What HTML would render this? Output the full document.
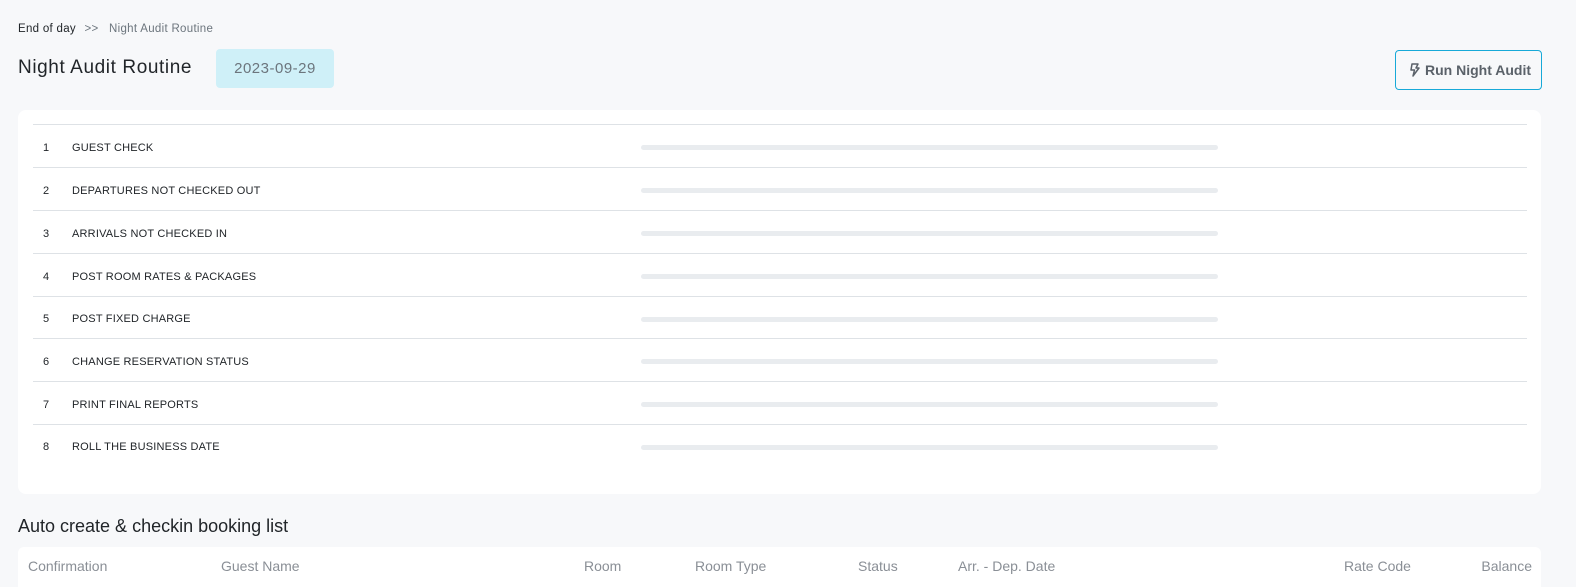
<!DOCTYPE html>
<html><head><style>
*{margin:0;padding:0;box-sizing:border-box}
body{width:1576px;height:586px;background:#f7f8fa;font-family:"Liberation Sans",sans-serif;position:relative;overflow:hidden;color:#212529}
.a{position:absolute;white-space:nowrap}
.card{position:absolute;left:18px;top:110px;width:1523px;height:384px;background:#fff;border-radius:8px}
.line{position:absolute;left:33px;width:1494px;height:1px;background:#dee2e6}
.num{position:absolute;left:43px;font-size:11px;color:#212529}
.lbl{position:absolute;left:72px;font-size:11px;letter-spacing:.2px;color:#212529}
.bar{position:absolute;left:641px;width:577px;height:5px;border-radius:3px;background:#e9ecef}
.th{position:absolute;top:558px;font-size:14px;color:#8a8f96}
</style></head><body>
<div class="a" style="left:18px;top:23px;font-size:11.5px;letter-spacing:.3px;color:#212529">End of day <span style="color:#6c757d;margin:0 7px 0 5px">&gt;&gt;</span> <span style="color:#6c757d">Night Audit Routine</span></div>
<div class="a" style="left:18px;top:57px;font-size:19px;letter-spacing:.6px;color:#212529">Night Audit Routine</div>
<div class="a" style="left:216px;top:49px;width:118px;height:39px;background:#cff0f8;border-radius:4px;font-size:15px;letter-spacing:.5px;color:#6c757d;text-align:center;line-height:39px">2023-09-29</div>
<div class="a" style="left:1395px;top:50px;width:147px;height:40px;border:1px solid #17a9d8;border-radius:4px;font-size:14px;font-weight:bold;color:#5a6169;line-height:38px;padding-left:14px">
<svg width="10" height="14" viewBox="0 0 10 14" style="vertical-align:-2px;margin-right:5px"><path d="M2 1h6L6 5h3L3 13l1.5-6H1z" fill="none" stroke="#5a6169" stroke-width="1.5" stroke-linejoin="round"/></svg>Run Night Audit</div>
<div class="card"></div>
<div class="line" style="top:124px"></div>
<div class="num" style="top:142px">1</div><div class="lbl" style="top:142px">GUEST CHECK</div><div class="bar" style="top:145px"></div><div class="line" style="top:167px"></div>
<div class="num" style="top:185px">2</div><div class="lbl" style="top:185px">DEPARTURES NOT CHECKED OUT</div><div class="bar" style="top:188px"></div><div class="line" style="top:210px"></div>
<div class="num" style="top:228px">3</div><div class="lbl" style="top:228px">ARRIVALS NOT CHECKED IN</div><div class="bar" style="top:231px"></div><div class="line" style="top:253px"></div>
<div class="num" style="top:271px">4</div><div class="lbl" style="top:271px">POST ROOM RATES &amp; PACKAGES</div><div class="bar" style="top:274px"></div><div class="line" style="top:296px"></div>
<div class="num" style="top:313px">5</div><div class="lbl" style="top:313px">POST FIXED CHARGE</div><div class="bar" style="top:317px"></div><div class="line" style="top:338px"></div>
<div class="num" style="top:356px">6</div><div class="lbl" style="top:356px">CHANGE RESERVATION STATUS</div><div class="bar" style="top:359px"></div><div class="line" style="top:381px"></div>
<div class="num" style="top:399px">7</div><div class="lbl" style="top:399px">PRINT FINAL REPORTS</div><div class="bar" style="top:402px"></div><div class="line" style="top:424px"></div>
<div class="num" style="top:441px">8</div><div class="lbl" style="top:441px">ROLL THE BUSINESS DATE</div><div class="bar" style="top:445px"></div>
<div class="a" style="left:18px;top:516px;font-size:18px;color:#212529">Auto create &amp; checkin booking list</div>
<div class="a" style="left:18px;top:547px;width:1523px;height:40px;background:#fff;border-radius:6px 6px 0 0"></div>
<div class="th" style="left:28px">Confirmation</div>
<div class="th" style="left:221px">Guest Name</div>
<div class="th" style="left:584px">Room</div>
<div class="th" style="left:695px">Room Type</div>
<div class="th" style="left:858px">Status</div>
<div class="th" style="left:958px">Arr. - Dep. Date</div>
<div class="th" style="left:1344px">Rate Code</div>
<div class="th" style="right:44px">Balance</div>
</body></html>
